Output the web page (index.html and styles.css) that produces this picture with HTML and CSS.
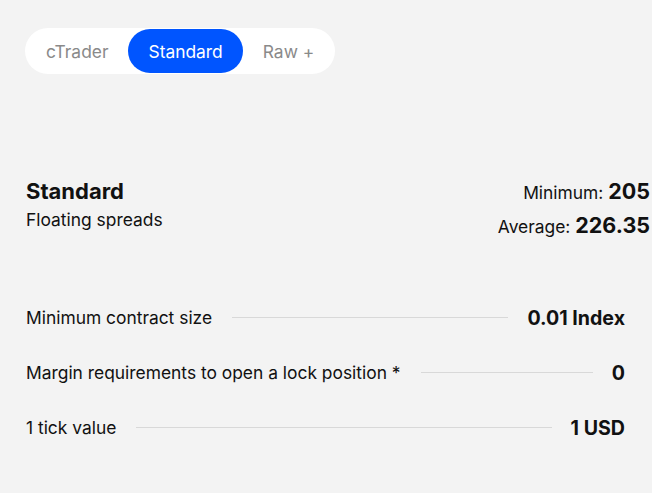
FILE: index.html
```html
<!DOCTYPE html>
<html lang="en">
<head>
  <meta charset="UTF-8">
  <meta name="viewport" content="width=device-width, initial-scale=1.0">
  <title>Account types</title>
  <link rel="stylesheet" href="styles.css">
</head>
<body>

  <div class="tabs">
    <button class="tab">cTrader</button>
    <button class="tab active">Standard</button>
    <button class="tab">Raw +</button>
  </div>

  <div class="account-head">
    <div class="account-name">
      <h2>Standard</h2>
      <p>Floating spreads</p>
    </div>
    <div class="spreads">
      <div class="spread">Minimum: <b>205</b></div>
      <div class="spread">Average: <b>226.35</b></div>
    </div>
  </div>

  <ul class="specs">
    <li>
      <span class="spec-label">Minimum contract size</span>
      <span class="spec-line"></span>
      <span class="spec-value">0.01 Index</span>
    </li>
    <li>
      <span class="spec-label">Margin requirements to open a lock position *</span>
      <span class="spec-line"></span>
      <span class="spec-value">0</span>
    </li>
    <li>
      <span class="spec-label">1 tick value</span>
      <span class="spec-line"></span>
      <span class="spec-value">1 USD</span>
    </li>
  </ul>

</body>
</html>
```

FILE: styles.css
```css
body {
  margin: 0;
  padding: 28px 0 0 26px;
  background-color: #f3f3f3;
  color: #111;
  font-family: Inter, 'Noto Sans', sans-serif;
  overflow: hidden;
}

.tabs {
  display: inline-flex;
  align-items: center;
  background-color: white;
  border-radius: 23px;
  height: 46px;
  padding: 0 1px;
  margin-left: -1px;
}

.tab {
  border: none;
  background: none;
  font-family: inherit;
  font-size: 17.4px;
  color: #8a8a8a;
  height: 44px;
  padding: 0 20px;
  border-radius: 22px;
  cursor: pointer;
}

.tab.active {
  background-color: #0055ff;
  color: white;
}

.account-head {
  display: flex;
  justify-content: space-between;
  align-items: flex-start;
  margin-top: 104px;
  width: 624px;
}

.account-name h2 {
  margin: 0;
  font-size: 22px;
  font-weight: 700;
  line-height: 26px;
}

.account-name p {
  margin: 4px 0 0 0;
  font-size: 17.4px;
  line-height: 24px;
}

.spreads {
  text-align: right;
  margin-top: -3px;
}

.spread {
  font-size: 17.4px;
  line-height: 32px;
}

.spread b {
  font-size: 21.5px;
  font-weight: 700;
}

.specs {
  list-style: none;
  padding: 0;
  margin: 47px 0 0 0;
  width: 599px;
}

.specs li {
  display: flex;
  align-items: center;
  height: 55px;
}

.spec-label {
  font-size: 17.4px;
  white-space: nowrap;
}

.spec-line {
  flex: 1;
  height: 1px;
  background-color: #d8d8d8;
  margin: 0 19px 0 20px;
}

.spec-value {
  font-size: 19.6px;
  font-weight: 700;
  white-space: nowrap;
}
```
